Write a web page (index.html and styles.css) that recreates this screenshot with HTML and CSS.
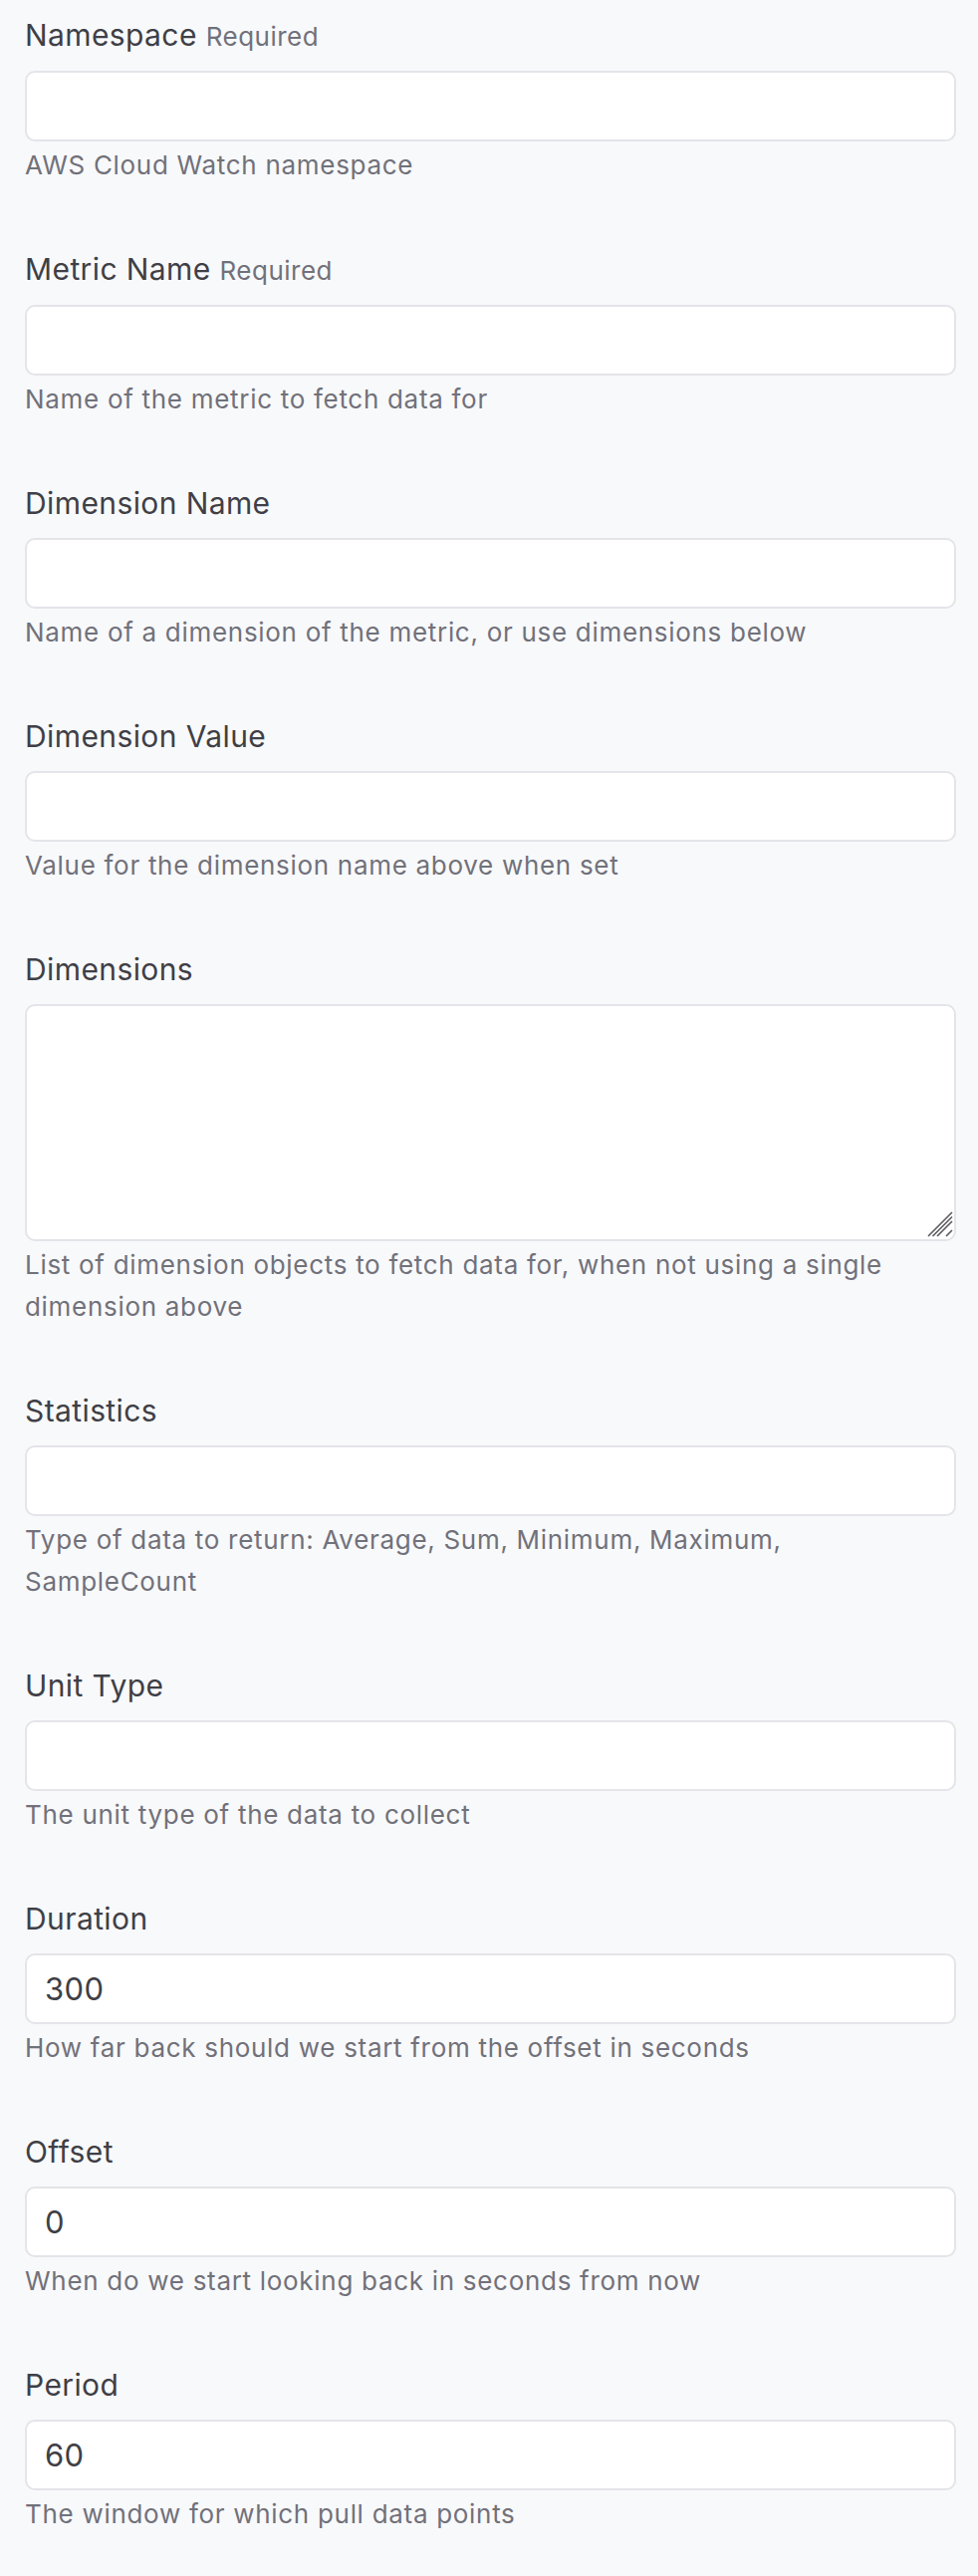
FILE: index.html
```html
<!DOCTYPE html>
<html lang="en">
<head>
<meta charset="utf-8">
<title>CloudWatch settings</title>
<link rel="stylesheet" href="styles.css">
</head>
<body>
<form class="form">
  <div class="field">
    <label class="label">Namespace <span class="req">Required</span></label>
    <input class="input" type="text">
    <p class="help">AWS Cloud Watch namespace</p>
  </div>
  <div class="field">
    <label class="label">Metric Name <span class="req">Required</span></label>
    <input class="input" type="text">
    <p class="help">Name of the metric to fetch data for</p>
  </div>
  <div class="field">
    <label class="label">Dimension Name</label>
    <input class="input" type="text">
    <p class="help">Name of a dimension of the metric, or use dimensions below</p>
  </div>
  <div class="field">
    <label class="label">Dimension Value</label>
    <input class="input" type="text">
    <p class="help">Value for the dimension name above when set</p>
  </div>
  <div class="field">
    <label class="label">Dimensions</label>
    <div class="textarea-wrap">
      <textarea class="input textarea"></textarea>
      <svg class="grip" width="26" height="26" viewBox="0 0 26 26" aria-hidden="true">
        <path d="M1 25 L25 1 M5.5 25 L25 5.5 M10 25 L25 10 M19 25 L25 19" stroke="#5a5a60" stroke-width="1.6" fill="none"/>
      </svg>
    </div>
    <p class="help">List of dimension objects to fetch data for, when not using a single dimension above</p>
  </div>
  <div class="field">
    <label class="label">Statistics</label>
    <input class="input" type="text">
    <p class="help">Type of data to return: Average, Sum, Minimum, Maximum, SampleCount</p>
  </div>
  <div class="field">
    <label class="label">Unit Type</label>
    <input class="input" type="text">
    <p class="help">The unit type of the data to collect</p>
  </div>
  <div class="field">
    <label class="label">Duration</label>
    <input class="input" type="text" value="300">
    <p class="help">How far back should we start from the offset in seconds</p>
  </div>
  <div class="field">
    <label class="label">Offset</label>
    <input class="input" type="text" value="0">
    <p class="help">When do we start looking back in seconds from now</p>
  </div>
  <div class="field">
    <label class="label">Period</label>
    <input class="input" type="text" value="60">
    <p class="help">The window for which pull data points</p>
  </div>
</form>
</body>
</html>
```

FILE: styles.css
```css
html, body {
  margin: 0;
  padding: 0;
  background: #f8f9fb;
}

body {
  font-family: Inter, "Noto Sans", sans-serif;
  color: #3f3f46;
}

.form {
  padding: 13px 22px 0 25px;
}

.field {
  margin-bottom: 61.5px;
}

.label {
  display: block;
  font-size: 30px;
  line-height: 45px;
  letter-spacing: 0.4px;
  color: #3f3f46;
  margin-bottom: 12px;
}

.req {
  font-size: 26px;
  letter-spacing: 0.5px;
  color: #71717a;
}

.input {
  display: block;
  width: 100%;
  height: 71px;
  box-sizing: border-box;
  margin: 0;
  padding: 0 18px;
  border: 2px solid #e4e4e9;
  border-radius: 10px;
  background: #ffffff;
  font-family: Inter, "Noto Sans", sans-serif;
  font-size: 31px;
  letter-spacing: 0.4px;
  color: #3f3f46;
  outline: none;
}

.textarea-wrap {
  position: relative;
}

.textarea {
  height: 238px;
  padding: 14px 18px;
  resize: none;
}

.grip {
  position: absolute;
  right: 3px;
  bottom: 4px;
  display: block;
}

.help {
  margin: 2.5px 0 0;
  font-size: 26px;
  line-height: 42px;
  letter-spacing: 0.7px;
  color: #71717a;
}
```
